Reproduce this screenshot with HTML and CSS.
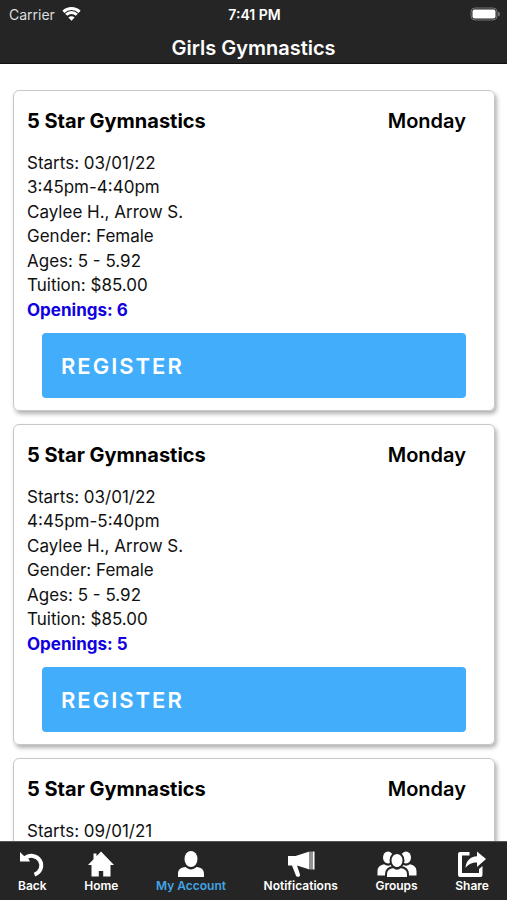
FILE: index.html
```html
<!DOCTYPE html>
<html lang="en">
<head>
<meta charset="utf-8">
<meta name="viewport" content="width=device-width, initial-scale=1">
<title>Girls Gymnastics</title>
<link rel="stylesheet" href="styles.css">
</head>
<body>
<div class="app">
  <header class="header">
    <div class="status">
      <span class="carrier">Carrier
        <svg class="wifi" viewBox="0 0 19 14" aria-hidden="true"><path d="M1.4 4.9a11.5 11.5 0 0 1 16.2 0" /><path d="M4.2 7.8a7.5 7.5 0 0 1 10.600 0" /><path class="solid" d="M6.4 10.600a4.4 4.4 0 0 1 6.2 0L9.5 13.8z" /></svg>
      </span>
      <time class="clock">7:41 PM</time>
      <svg class="battery" viewBox="0 0 30 14" aria-hidden="true"><rect class="shell" x="1" y="1" width="26" height="12" rx="4" /><rect class="charge" x="2.500" y="2.500" width="23" height="9" rx="2" /><path class="tip" d="M28 4.500q2 .5 2 2.500t-2 2.500z" /></svg>
    </div>
    <h1 class="title">Girls Gymnastics</h1>
  </header>

  <main class="classes">
    <article class="card">
      <div class="card-head"><h2>5 Star Gymnastics</h2><span class="day">Monday</span></div>
      <ul class="details">
        <li>Starts: 03/01/22</li>
        <li>3:45pm-4:40pm</li>
        <li>Caylee H., Arrow S.</li>
        <li>Gender: Female</li>
        <li>Ages: 5 - 5.92</li>
        <li>Tuition: $85.00</li>
        <li class="openings">Openings: 6</li>
      </ul>
      <button class="register" type="button">REGISTER</button>
    </article>
    <article class="card">
      <div class="card-head"><h2>5 Star Gymnastics</h2><span class="day">Monday</span></div>
      <ul class="details">
        <li>Starts: 03/01/22</li>
        <li>4:45pm-5:40pm</li>
        <li>Caylee H., Arrow S.</li>
        <li>Gender: Female</li>
        <li>Ages: 5 - 5.92</li>
        <li>Tuition: $85.00</li>
        <li class="openings">Openings: 5</li>
      </ul>
      <button class="register" type="button">REGISTER</button>
    </article>
    <article class="card">
      <div class="card-head"><h2>5 Star Gymnastics</h2><span class="day">Monday</span></div>
      <ul class="details">
        <li>Starts: 09/01/21</li>
      </ul>
    </article>
  </main>

  <nav class="tabs" aria-label="Main">
    <a class="tab" href="#back">
      <svg width="28" height="28" viewBox="0 0 28 28" aria-hidden="true"><path d="M2 2l3.500 3.500L10 8l2 3.500H2z" /><path class="line" d="M7 8.500A9.600 9.600 0 1 1 16.500 24.600" /></svg>
      <span>Back</span>
    </a>
    <a class="tab" href="#home">
      <svg width="28" height="28" viewBox="0 0 28 28" aria-hidden="true"><path d="M14 1.500L27 15h-3.500v11.500h-7.300V21h-4.400v5.500H4.500V15H1l5.500-5.700V3.500h3v2.700z" /></svg>
      <span>Home</span>
    </a>
    <a class="tab active" href="#account" aria-current="page">
      <svg width="28" height="28" viewBox="0 0 28 28" aria-hidden="true"><ellipse cx="14" cy="9" rx="6.500" ry="8" /><path d="M1 27v-3c0-4.500 2.500-6.500 7.500-7 3.500 3.300 7.500 3.300 11 0 5 .5 7.500 2.500 7.500 7v3z" /></svg>
      <span>My Account</span>
    </a>
    <a class="tab" href="#notifications">
      <svg width="28" height="28" viewBox="0 0 28 28" aria-hidden="true"><path d="M1 6h7.500L22.500 1.500v18L10 15.500l3 9c.6 2.200-2.900 3.300-4 1.200L5 15.500H1zM23.500 1.500h1v18h-1zM25.500 1.500h2v18h-2z" /></svg>
      <span>Notifications</span>
    </a>
    <a class="tab" href="#groups">
      <svg width="40" height="28" viewBox="0 0 40 28" aria-hidden="true"><ellipse cx="11" cy="7.500" rx="5" ry="6" /><ellipse cx="29" cy="7.500" rx="5" ry="6" /><path d="M.5 25.500v-4c0-4 2-6.200 6.500-7.200 2.500 1.900 5.500 1.900 8 0h10c2.500 1.900 5.500 1.900 8 0 4.500 1 6.500 3.200 6.500 7.200v4z" /><ellipse class="front" cx="20" cy="10.500" rx="6.500" ry="7.500" /><path class="front" d="M9 28v-3.700c0-4.800 2.500-6.800 7.500-7.300 2.200 2 4.800 2 7 0 5 .5 7.500 2.500 7.500 7.300V28z" /></svg>
      <span>Groups</span>
    </a>
    <a class="tab" href="#share">
      <svg width="30" height="28" viewBox="0 0 30 28" aria-hidden="true"><path d="M3 2H12.500v3.500H5v17.500h17V19l3.500-3v9q0 2-2 2H3q-2 0-2-2V4q0-2 2-2zM20 1.500L29 9l-9 8v-4.500c-5 0-8.500 1.500-11.500 5.500C9 11 13 6.500 20 6.200z" /></svg>
      <span>Share</span>
    </a>
  </nav>
</div>
</body>
</html>
```
FILE: styles.css
```css
* {
  box-sizing: border-box;
}

body {
  margin: 0;
  background: #fff;
  color: #111;
  font-family: Inter, "Liberation Sans", sans-serif;
}

.app {
  display: flex;
  flex-direction: column;
  height: 100vh;
}

.header {
  flex: none;
  padding-bottom: 1px;
  background: #252525;
  border-bottom: 1px solid #111;
  color: #fff;
}

.status {
  display: grid;
  grid-template-columns: 1fr auto 1fr;
  align-items: center;
  height: 28px;
  padding: 0 7px 0 9px;
  font-size: 14px;
}

.carrier {
  display: flex;
  align-items: center;
  gap: 7px;
  color: #ddd;
}

.wifi {
  width: 19px;
  height: 14px;
  fill: none;
  stroke: #fff;
  stroke-width: 3;
}

.wifi .solid {
  fill: #fff;
  stroke: none;
}

.clock {
  font-weight: 600;
}

.battery {
  justify-self: end;
  width: 30px;
  height: 14px;
}

.shell {
  fill: none;
  stroke: #777;
}

.charge {
  fill: #fff;
}

.tip {
  fill: #777;
}

.title {
  margin: 0;
  padding-top: 6px;
  font-size: 20px;
  font-weight: 600;
  line-height: 28px;
  text-align: center;
}

.classes {
  display: flex;
  flex: 1;
  flex-direction: column;
  gap: 13px;
  min-height: 0;
  padding: 26px 12px 0 13px;
  overflow: hidden;
}

.card {
  flex: none;
  padding: 15px 28px 12px 13px;
  border: 1px solid #c8c8c8;
  border-radius: 6px;
  box-shadow: 2px 3px 4px rgba(0, 0, 0, 0.3);
}

.card-head {
  display: flex;
  justify-content: space-between;
  margin-bottom: 15px;
  color: #000;
  font-size: 20px;
  font-weight: 600;
  line-height: 30px;
}

.card-head h2 {
  margin: 0;
  font-size: 20px;
  font-weight: 700;
}

.details {
  display: grid;
  grid-auto-rows: 1fr;
  margin: 0 0 11px;
  padding: 0;
  font-size: 17px;
  line-height: 25px;
  list-style: none;
}

.details:has(.openings) {
  height: 171px;
  grid-template-rows: repeat(7, minmax(0, 1fr));
}

.openings {
  color: #1100e0;
  font-weight: 700;
}

.register {
  display: block;
  width: calc(100% - 15px);
  height: 65px;
  margin-left: 15px;
  padding: 0 19px;
  border: 0;
  border-radius: 4px;
  background: #42aefb;
  color: #fff;
  font-family: inherit;
  font-size: 22px;
  font-weight: 600;
  letter-spacing: 2px;
  text-align: left;
}

.tabs {
  display: flex;
  flex: none;
  justify-content: space-between;
  padding: 8px 18px 6px;
  background: #252525;
  border-top: 1px solid #555;
}

.tab {
  display: flex;
  flex-direction: column;
  align-items: center;
  color: #fff;
  font-size: 12px;
  font-weight: 600;
  line-height: 16px;
  text-decoration: none;
}

.tab svg {
  fill: #fff;
}

.tab .line {
  fill: none;
  stroke: #fff;
  stroke-width: 4;
}

.tab .front {
  stroke: #252525;
  stroke-width: 2;
}

.tab.active {
  color: #42a5e5;
}
```
